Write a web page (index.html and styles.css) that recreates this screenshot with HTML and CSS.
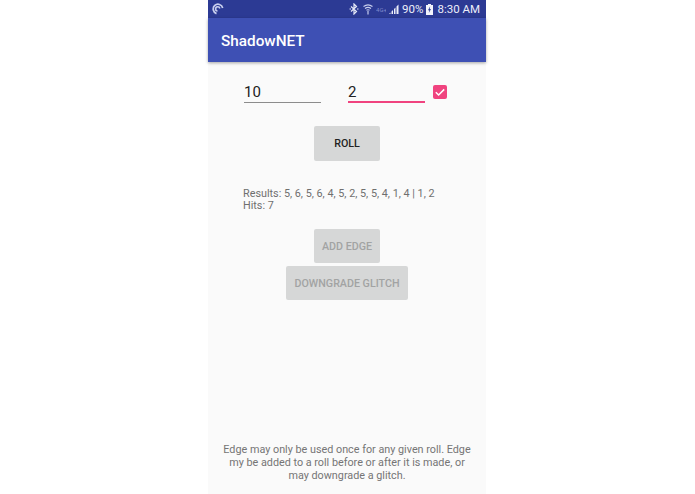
FILE: index.html
```html
<!DOCTYPE html>
<html lang="en">
<head>
<meta charset="utf-8">
<title>ShadowNET</title>
<link rel="stylesheet" href="styles.css">
</head>
<body>
<div class="phone">
  <div class="status">
    <svg class="sync" viewBox="0 0 12 12" width="12" height="12"><path d="M10.700 5A4.800 4.800 0 1 0 4.500 10.600" fill="none" stroke="#c9cfee" stroke-width="1.700"/><path d="M7.800 5.500A2.100 2.100 0 1 0 5.500 8" fill="none" stroke="#c9cfee" stroke-width="1.600"/></svg>
    <div class="status-right">
      <svg class="ic-bt" viewBox="0 0 10 12" width="10" height="12"><path d="M2 3.500 7.500 8.500 5 11V1L7.500 3.500 2 8.500" fill="none" stroke="#e4e7f6" stroke-width="1.200"/><path d="M.5 6h1.500M8 6h1.500" stroke="#e4e7f6" stroke-width="1.200"/></svg>
      <svg class="ic-wifi" viewBox="0 0 10 12" width="10" height="12"><path d="M.5 3.500Q5 .2 9.500 3.500M2 5.500Q5 3.300 8 5.500M3.500 7.300Q5 6.300 6.500 7.300" fill="none" stroke="#c9cfee" stroke-width="1.100"/><path d="M5 8v3.500" stroke="#c9cfee" stroke-width="1.200"/></svg>
      <span class="lte">4G+</span>
      <svg class="ic-sig" viewBox="0 0 10 10" width="10" height="10"><path d="M0 10 1.500 8.500V10ZM2.500 10V7.500L4 6V10ZM5 10V5L6.500 3.500V10ZM7.500 10V2.500L9.500 .5V10Z" fill="#eceef9"/></svg>
      <span class="pct">90%</span>
      <svg class="ic-bat" viewBox="0 0 7 11" width="7" height="11"><path d="M2 0H5V1H7V11H0V1H2Z" fill="#f2f3fb"/><path d="M4.200 2.200 2 6.200H3.300L2.800 9 5 5H3.700Z" fill="#2c3a94"/></svg>
      <span class="time">8:30 AM</span>
    </div>
  </div>
  <header class="appbar">ShadowNET</header>
  <main class="content">
    <div class="inputs">
      <div class="field">10</div>
      <div class="field field-active">2</div>
      <svg class="check" viewBox="0 0 14 14" width="14" height="14"><rect width="14" height="14" rx="2" fill="#f0437f"/><path d="M2.800 7.200 5.600 10 11.200 4.400" fill="none" stroke="#fff" stroke-width="1.500"/></svg>
    </div>
    <button class="btn btn-roll" type="button">ROLL</button>
    <div class="results">
      <div>Results: 5, 6, 5, 6, 4, 5, 2, 5, 5, 4, 1, 4 | 1, 2</div>
      <div>Hits: 7</div>
    </div>
    <button class="btn btn-off btn-edge" type="button">ADD EDGE</button>
    <button class="btn btn-off btn-glitch" type="button">DOWNGRADE GLITCH</button>
    <p class="note">Edge may only be used once for any given roll. Edge my be added to a roll before or after it is made, or may downgrade a glitch.</p>
  </main>
</div>
</body>
</html>
```
FILE: styles.css
```css
* { box-sizing: border-box; }
html, body { margin: 0; height: 100%; background: #fff; }
body { display: flex; justify-content: flex-start; overflow: hidden; padding-left: 208px; font-family: Roboto, "Liberation Sans", sans-serif; }
.phone { width: 278px; height: 494px; display: flex; flex-direction: column; background: #fafafa; }
.status { height: 18px; flex: none; background: #2c3a94; display: flex; align-items: center; justify-content: space-between; padding: 0 6px 0 4px; color: #eceef9; }
.sync { display: block; }
.status-right { display: flex; align-items: center; }
.ic-bt { margin-right: 4px; }
.ic-wifi { margin-right: 3px; }
.lte { font-size: 6px; color: #7f8acb; width: 10px; margin-right: 3px; white-space: nowrap; overflow: hidden; }
.ic-sig { margin-right: 3px; }
.pct { font-size: 11.5px; line-height: 18px; }
.ic-bat { margin: 0 4px 0 3px; }
.time { font-size: 11.5px; line-height: 18px; }
.appbar { height: 44px; flex: none; background: #3e50b4; color: #fff; font-size: 15.3px; font-weight: 500; line-height: 46px; padding-left: 13px; box-shadow: 0 1px 3px rgba(0,0,0,.35); position: relative; }
.content { flex: 1; display: flex; flex-direction: column; align-items: center; color: #6f6f6f; }
.inputs { display: flex; align-items: flex-start; margin-top: 19px; width: 278px; padding-left: 36px; }
.field { width: 77px; height: 22px; border-bottom: 1px solid #8c8c8c; color: #222; font-size: 15px; line-height: 23px; }
.field-active { margin-left: 27px; border-bottom: 2px solid #f0437f; }
.check { margin: 4px 0 0 8px; display: block; }
.btn { display: block; border: 0; border-radius: 2px; background: #d6d7d7; font-family: inherit; font-size: 10.7px; font-weight: 500; padding: 0; }
.btn-roll { width: 66px; height: 35px; margin-top: 23px; color: #222; }
.results { width: 208px; margin-top: 27px; font-size: 10.8px; line-height: 12px; color: #6f6f6f; white-space: nowrap; }
.btn-off { color: #a2a3a3; }
.btn-edge { width: 66px; height: 34px; margin-top: 17px; }
.btn-glitch { width: 122px; height: 34px; margin-top: 3px; }
.note { margin: auto 0 12px; width: 252px; font-size: 10.8px; line-height: 13px; text-align: center; color: #757575; }
```
